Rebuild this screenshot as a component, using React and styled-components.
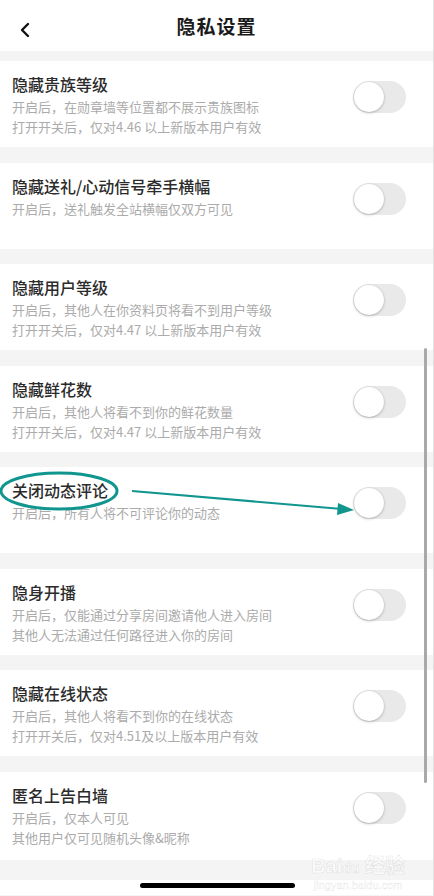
import React from 'react'
import styled, { createGlobalStyle } from 'styled-components'

const items = [
    { title: '隐藏贵族等级', lines: ['开启后，在勋章墙等位置都不展示贵族图标', '打开开关后，仅对4.46 以上新版本用户有效'] },
    { title: '隐藏送礼/心动信号牵手横幅', lines: ['开启后，送礼触发全站横幅仅双方可见'] },
    { title: '隐藏用户等级', lines: ['开启后，其他人在你资料页将看不到用户等级', '打开开关后，仅对4.47 以上新版本用户有效'] },
    { title: '隐藏鲜花数', lines: ['开启后，其他人将看不到你的鲜花数量', '打开开关后，仅对4.47 以上新版本用户有效'] },
    { title: '关闭动态评论', lines: ['开启后，所有人将不可评论你的动态'], marked: true },
    { title: '隐身开播', lines: ['开启后，仅能通过分享房间邀请他人进入房间', '其他人无法通过任何路径进入你的房间'] },
    { title: '隐藏在线状态', lines: ['开启后，其他人将看不到你的在线状态', '打开开关后，仅对4.51及以上版本用户有效'] },
    { title: '匿名上告白墙', lines: ['开启后，仅本人可见', '其他用户仅可见随机头像&昵称'] },
]

function App() {
    return (
        <Screen>
            <GlobalStyle />
            <Header>
                <BackButton>
                    <svg width="12" height="16" viewBox="0 0 12 16">
                        <polyline points="9,2 3,8 9,14" fill="none" stroke="#111" strokeWidth="2.4" strokeLinecap="round" strokeLinejoin="round" />
                    </svg>
                </BackButton>
                <Title>隐私设置</Title>
            </Header>
            <List>
                {items.map((item) => (
                    <Card key={item.title}>
                        <Texts>
                            <ItemTitle>{item.title}</ItemTitle>
                            {item.lines.map((l) => (
                                <Desc key={l}>{l}</Desc>
                            ))}
                        </Texts>
                        <Switch>
                            <Knob />
                        </Switch>
                        {item.marked && (
                            <Annotation width="434" height="50" viewBox="0 0 434 50">
                                <ellipse cx="59" cy="22" rx="58" ry="18" fill="none" stroke="#10958f" strokeWidth="3" />
                                <line x1="132" y1="22" x2="342" y2="40" stroke="#10958f" strokeWidth="2" />
                                <polygon points="354,41 338,34 337,46" fill="#10958f" />
                            </Annotation>
                        )}
                    </Card>
                ))}
            </List>
            <HomeBar>
                <Indicator />
            </HomeBar>
            <Scrollbar />
            <Watermark>
                <Mark>Bai<small>du</small> 经验</Mark>
                <MarkUrl>jingyan.baidu.com</MarkUrl>
            </Watermark>
        </Screen>
    )
}

export default App

const GlobalStyle = createGlobalStyle`
body{
    margin:0;
    background:#f4f4f4;
    font-family: "Noto Sans CJK SC", "Noto Sans", sans-serif;
}
`;

const Screen = styled.div`
position: relative;
width: 434px;
height: 896px;
overflow: hidden;
background-color: #f4f4f4;
border-right: 1px solid #e2e2e2;
box-sizing: border-box;
`;

const Header = styled.div`
position: relative;
height: 51px;
background: #fff;
display:flex;
align-items:center;
justify-content:center;
`;

const BackButton = styled.div`
position: absolute;
left: 19px;
top: 19px;
`;

const Title = styled.h1`
margin:0;
font-size: 19px;
font-weight: 600;
color: #1a1a1a;
letter-spacing: 1px;
`;

const List = styled.div`
display:flex;
flex-direction:column;
gap: 15.5px;
padding-top: 10px;
`;

const Card = styled.div`
position: relative;
min-height: 86px;
box-sizing: border-box;
background:#fff;
display:flex;
justify-content:space-between;
align-items:flex-start;
padding: 12px 27px 0 12px;
&:last-child{
    min-height: 88px;
}
`;

const Texts = styled.div`
display:flex;
flex-direction:column;
`;

const ItemTitle = styled.div`
font-size: 16px;
line-height: 22px;
font-weight: 500;
color: #2b2b2b;
margin-bottom: 2px;
`;

const Desc = styled.div`
font-size: 13px;
line-height: 20px;
color: #ababab;
`;

const Switch = styled.div`
margin-top: 8px;
width: 53px;
height: 32px;
border-radius: 16px;
background: #e9e9e9;
display:flex;
align-items:center;
padding-left: 1px;
box-sizing: border-box;
`;

const Knob = styled.div`
width: 30px;
height: 30px;
border-radius: 50%;
background:#fff;
box-shadow: 0 1px 3px rgba(0,0,0,0.22), 0 0 0 0.5px rgba(0,0,0,0.06);
`;

const Annotation = styled.svg`
position:absolute;
left:0;
top:2px;
pointer-events:none;
`;

const HomeBar = styled.div`
margin-top: 20px;
height: 15px;
background:#fff;
display:flex;
justify-content:center;
padding-top: 3px;
box-sizing:border-box;
`;

const Indicator = styled.div`
width: 155px;
height: 5px;
border-radius: 3px;
background:#000;
margin-left: 2px;
`;

const Scrollbar = styled.div`
position:absolute;
right: 6px;
top: 348px;
width: 3px;
height: 435px;
border-radius: 2px;
background:#a9a9a9;
`;

const Watermark = styled.div`
position:absolute;
right: 28px;
bottom: 4px;
display:flex;
flex-direction:column;
align-items:center;
pointer-events:none;
`;

const Mark = styled.div`
font-family: "Liberation Sans", "Noto Sans CJK SC", sans-serif;
font-size: 20px;
font-weight: 700;
line-height: 22px;
color: rgba(255,255,255,0.6);
-webkit-text-stroke: 0.6px rgba(170,170,170,0.3);
small{
    font-size: 14px;
}
`;

const MarkUrl = styled.div`
font-family: "Liberation Sans", sans-serif;
font-size: 11px;
line-height: 13px;
color: rgba(255,255,255,0.6);
-webkit-text-stroke: 0.4px rgba(170,170,170,0.3);
`;
